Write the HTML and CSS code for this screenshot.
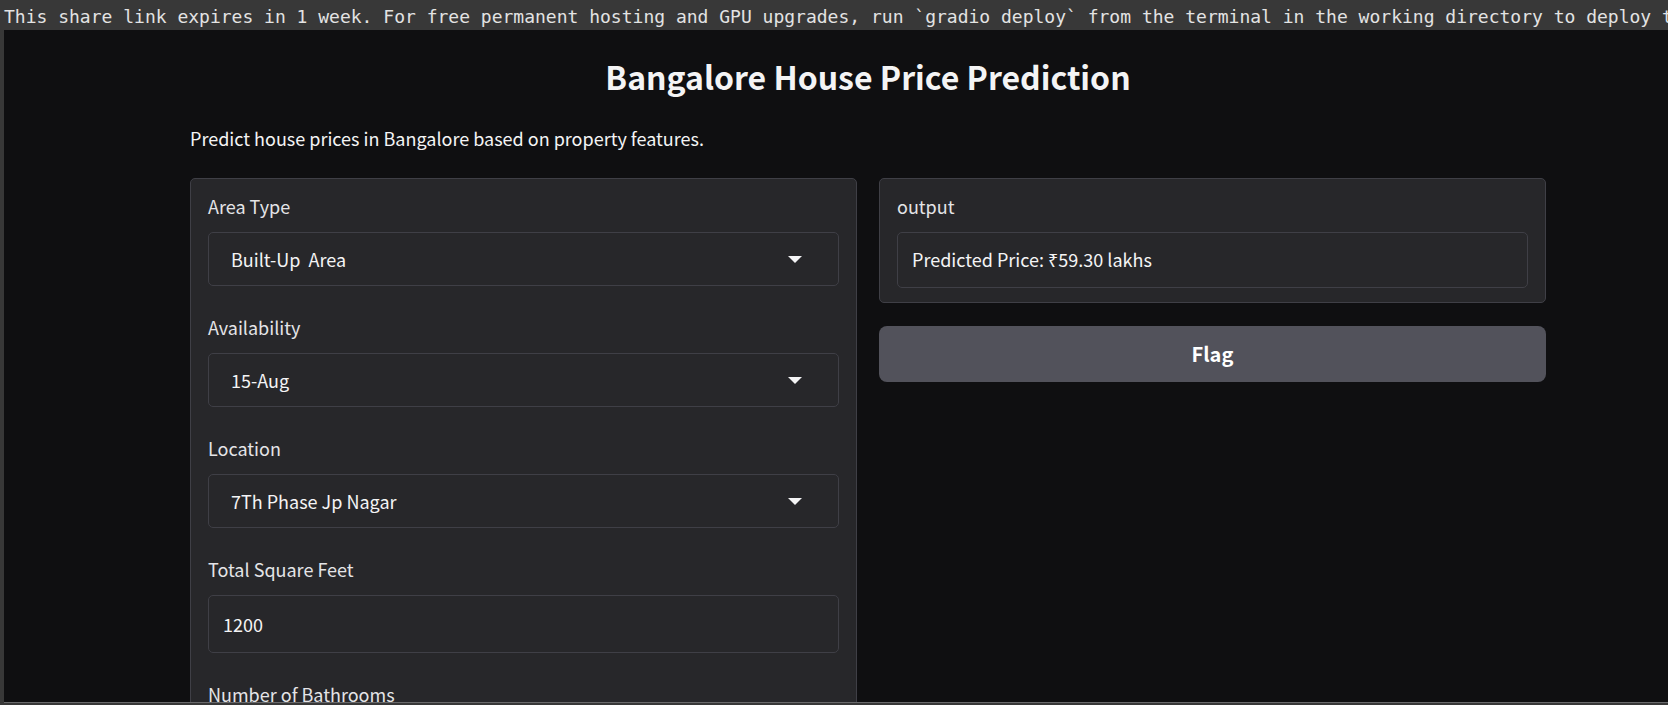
FILE: index.html
```
<!DOCTYPE html>
<html lang="en">
<head>
<meta charset="utf-8">
<meta name="viewport" content="width=device-width, initial-scale=1">
<title>Bangalore House Price Prediction</title>
<link rel="stylesheet" href="styles.css">
</head>
<body>
<p class="log">This share link expires in 1 week. For free permanent hosting and GPU upgrades, run `gradio deploy` from the terminal in the working directory to deploy to</p>
<main class="app">
  <h1 class="title">Bangalore House Price Prediction</h1>
  <p class="intro">Predict house prices in Bangalore based on property features.</p>
  <div class="columns">
    <form class="card">
      <div class="field">
        <label class="label" for="area-type">Area Type</label>
        <div class="dropdown">
          <select class="control select" id="area-type"><option>Built-Up&nbsp; Area</option></select>
          <svg class="arrow" viewBox="0 0 14 7" aria-hidden="true"><path d="M0 0h14L7 7z"/></svg>
        </div>
      </div>
      <div class="field">
        <label class="label" for="availability">Availability</label>
        <div class="dropdown">
          <select class="control select" id="availability"><option>15-Aug</option></select>
          <svg class="arrow" viewBox="0 0 14 7" aria-hidden="true"><path d="M0 0h14L7 7z"/></svg>
        </div>
      </div>
      <div class="field">
        <label class="label" for="location">Location</label>
        <div class="dropdown">
          <select class="control select" id="location"><option>7Th Phase Jp Nagar</option></select>
          <svg class="arrow" viewBox="0 0 14 7" aria-hidden="true"><path d="M0 0h14L7 7z"/></svg>
        </div>
      </div>
      <div class="field">
        <label class="label" for="sqft">Total Square Feet</label>
        <input class="control number" id="sqft" type="text" inputmode="numeric" value="1200">
      </div>
      <div class="field">
        <label class="label" for="bathrooms">Number of Bathrooms</label>
        <input class="control number" id="bathrooms" type="text" inputmode="numeric">
      </div>
    </form>
    <div class="results">
      <section class="card">
        <div class="field">
          <label class="label" for="output">output</label>
          <input class="control output" id="output" type="text" readonly value="Predicted Price: ₹59.30 lakhs">
        </div>
      </section>
      <button class="flag" type="button">Flag</button>
    </div>
  </div>
</main>
</body>
</html>
```
FILE: styles.css
```
* {
  box-sizing: border-box;
}

body {
  display: flex;
  flex-direction: column;
  height: 100vh;
  margin: 0;
  padding-bottom: 2px;
  overflow: hidden;
  background: #383838;
  color: #f4f4f5;
  font: 18px/24px "Noto Sans CJK SC", "Noto Sans", sans-serif;
}

.log {
  flex: none;
  margin: 0;
  padding: 5px 0 1px 4px;
  overflow: hidden;
  color: #e3e3e3;
  font: 18px/24px "DejaVu Sans Mono", monospace;
  white-space: nowrap;
}

.app {
  flex: 1;
  min-height: 0;
  margin-left: 4px;
  padding: 22px 122px 0 186px;
  overflow: hidden;
  border-bottom: 1px solid #69696b;
  background: #0f0f11;
}

.title {
  margin: 0 0 26px;
  font-size: 32px;
  font-weight: 700;
  line-height: 48px;
  text-align: center;
}

.intro {
  margin: 0 0 28px;
}

.columns {
  display: grid;
  grid-template-columns: 1fr 1fr;
  align-items: start;
  gap: 22px;
}

.results {
  display: grid;
  gap: 23px;
}

.card {
  display: grid;
  gap: 29px;
  padding: 15px 17px 14px;
  border: 1px solid #3f3f46;
  border-radius: 5px;
  background: #27272a;
}

.field {
  display: grid;
  gap: 14px;
}

.label {
  color: #e4e4e7;
}

.control {
  width: 100%;
  margin: 0;
  border: 1px solid #3f3f46;
  border-radius: 5px;
  background: #27272a;
  color: #f4f4f5;
  font: inherit;
}

.dropdown {
  display: grid;
  align-items: center;
}

.select {
  grid-area: 1 / 1;
  padding: 14px 22px;
  appearance: none;
}

.arrow {
  grid-area: 1 / 1;
  justify-self: end;
  width: 14px;
  height: 7px;
  margin-right: 37px;
  fill: #f4f4f5;
  pointer-events: none;
}

.number {
  padding: 16px 14px;
}

.output {
  padding: 14px 14px 16px;
}

.flag {
  padding: 14px 22px;
  border: 0;
  border-radius: 8px;
  background: #52525b;
  color: #fff;
  font: bold 20px/28px "Noto Sans CJK SC", "Noto Sans", sans-serif;
}
```
